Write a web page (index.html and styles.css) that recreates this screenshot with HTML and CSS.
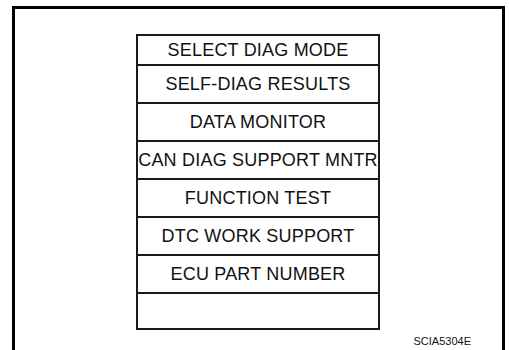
FILE: index.html
```html
<!DOCTYPE html>
<html>
  <head>
    <title>SCIA5304E</title>
    <meta name="viewport" content="width=device-width, initial-scale=1.0">
    <link rel="stylesheet" href="styles.css">
  </head>
  <body>
    <div class = "frame">
      <ul class = "menubox">
        <li class = "first">SELECT DIAG MODE</li>
        <li>SELF-DIAG RESULTS</li>
        <li>DATA MONITOR</li>
        <li>CAN DIAG SUPPORT MNTR</li>
        <li>FUNCTION TEST</li>
        <li>DTC WORK SUPPORT</li>
        <li>ECU PART NUMBER</li>
        <li class = "last"></li>
      </ul>
      <div class = "figcode">SCIA5304E</div>
    </div>
  </body>
</html>
```
FILE: styles.css
```css
*{box-sizing:border-box;margin:0;padding:0;color:#111;font-family:"Liberation Sans",Arial,sans-serif;}
html,body{height:100%;background:#fff;overflow:hidden;}
.frame{margin:6px 0 0 12px;width:493px;height:344px;border:3px solid #000;border-bottom:none;}
.menubox{list-style-type:none;margin:25px 0 0 121px;width:244px;border:2px solid #1a1a1a;}
.menubox li{height:38px;border-bottom:2px solid #1a1a1a;display:flex;align-items:center;justify-content:center;
  font-size:18px;letter-spacing:0.2px;white-space:nowrap;}
.menubox li.first{height:30px;}
.menubox li.last{height:34px;border-bottom:none;}
.figcode{margin-top:5px;padding-right:31px;text-align:right;font-size:11px;}
```
